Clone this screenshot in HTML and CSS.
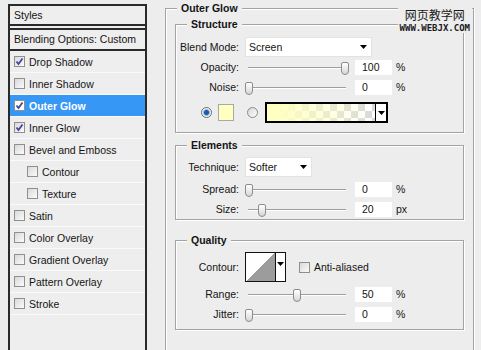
FILE: index.html
```html
<!DOCTYPE html>
<html lang="en">
  <head>
    <meta charset="UTF-8" />
    <title>Layer Style - Outer Glow</title>
    <link rel="stylesheet" href="styles.css">
  </head>
  <body>
    <div class="dialog">
      <div class="styles-panel">
        <div class="panel-head">Styles</div>
        <div class="panel-blend">Blending Options: Custom</div>
        <ul class="effects">
          <li><span class="box"><svg viewBox="0 0 9 9"><path d="M1.5 4.5 L3.5 7 L7.5 1.5" /></svg></span>Drop Shadow</li>
          <li><span class="box"></span>Inner Shadow</li>
          <li class="active"><span class="box"><svg viewBox="0 0 9 9"><path d="M1.5 4.5 L3.5 7 L7.5 1.5" /></svg></span>Outer Glow</li>
          <li><span class="box"><svg viewBox="0 0 9 9"><path d="M1.5 4.5 L3.5 7 L7.5 1.5" /></svg></span>Inner Glow</li>
          <li><span class="box"></span>Bevel and Emboss</li>
          <li class="sub"><span class="box"></span>Contour</li>
          <li class="sub"><span class="box"></span>Texture</li>
          <li><span class="box"></span>Satin</li>
          <li><span class="box"></span>Color Overlay</li>
          <li><span class="box"></span>Gradient Overlay</li>
          <li><span class="box"></span>Pattern Overlay</li>
          <li><span class="box"></span>Stroke</li>
        </ul>
      </div>

      <fieldset class="group outer">
        <legend>Outer Glow</legend>

        <fieldset class="group inner structure">
          <legend>Structure</legend>
          <div class="row">
            <label>Blend Mode:</label>
            <div class="select blend"><span>Screen</span><svg viewBox="0 0 7 4"><path d="M0 0h7L3.5 4z" /></svg></div>
          </div>
          <div class="row">
            <label>Opacity:</label>
            <div class="slider"><span class="thumb" style="--pos: 1"></span></div>
            <span class="num">100</span><span class="unit">%</span>
          </div>
          <div class="row">
            <label>Noise:</label>
            <div class="slider"><span class="thumb" style="--pos: 0"></span></div>
            <span class="num">0</span><span class="unit">%</span>
          </div>
          <div class="color-row">
            <span class="radio on"></span>
            <span class="swatch"></span>
            <span class="radio"></span>
            <div class="gradient">
              <span class="gradient-fill"></span>
              <span class="gradient-arrow"><svg viewBox="0 0 7 4"><path d="M0 0h7L3.5 4z" /></svg></span>
            </div>
          </div>
        </fieldset>

        <fieldset class="group inner elements">
          <legend>Elements</legend>
          <div class="row">
            <label>Technique:</label>
            <div class="select technique"><span>Softer</span><svg viewBox="0 0 7 4"><path d="M0 0h7L3.5 4z" /></svg></div>
          </div>
          <div class="row spaced">
            <label>Spread:</label>
            <div class="slider"><span class="thumb" style="--pos: 0"></span></div>
            <span class="num">0</span><span class="unit">%</span>
          </div>
          <div class="row">
            <label>Size:</label>
            <div class="slider"><span class="thumb" style="--pos: 0.14"></span></div>
            <span class="num">20</span><span class="unit">px</span>
          </div>
        </fieldset>

        <fieldset class="group inner quality">
          <legend>Quality</legend>
          <div class="row contour-row">
            <label>Contour:</label>
            <div class="contour">
              <span class="curve"></span>
              <span class="contour-arrow"><svg viewBox="0 0 7 4"><path d="M0 0h7L3.5 4z" /></svg></span>
            </div>
            <span class="box"></span>
            <span class="check-label">Anti-aliased</span>
          </div>
          <div class="row spaced">
            <label>Range:</label>
            <div class="slider"><span class="thumb" style="--pos: 0.5"></span></div>
            <span class="num">50</span><span class="unit">%</span>
          </div>
          <div class="row">
            <label>Jitter:</label>
            <div class="slider"><span class="thumb" style="--pos: 0"></span></div>
            <span class="num">0</span><span class="unit">%</span>
          </div>
        </fieldset>
      </fieldset>

      <div class="watermark">
        <div class="wm-cn">网页教学网</div>
        <div class="wm-url">WWW.WEBJX.COM</div>
      </div>
    </div>
  </body>
</html>
```

FILE: styles.css
```css
body {
  margin: 0;
  background-color: #ededed;
  font-family: "Liberation Sans", Arial, sans-serif;
  font-size: 10.5px;
  color: #141414;
  overflow: hidden;
}
.dialog {
  position: relative;
  display: flex;
  align-items: flex-start;
  height: 350px;
  padding-left: 8px;
}

/* left list of effects */
.styles-panel {
  flex: none;
  width: 139px;
  height: 360px;
  margin-top: 4px;
  box-sizing: border-box;
  border: 2px solid #2a2a2a;
  border-bottom: none;
  background-color: #eeeeee;
}
.panel-head {
  height: 18px;
  line-height: 18px;
  padding-left: 4px;
  border-bottom: 2px solid #2a2a2a;
  margin-bottom: 2px;
}
.panel-blend {
  height: 19px;
  line-height: 19px;
  padding-left: 4px;
  border-top: 2px solid #2a2a2a;
  border-bottom: 2px solid #2a2a2a;
}
.effects {
  list-style: none;
  margin: 0;
  padding: 0;
}
.effects li {
  display: flex;
  align-items: center;
  gap: 4px;
  height: 21px;
  padding-left: 4px;
  border-bottom: 1px solid #fafafa;
}
.effects li.sub {
  padding-left: 17px;
}
.effects li.active {
  background-color: #3797f5;
  color: #ffffff;
  font-weight: bold;
}
.effects li.active .box {
  background: #ffffff;
}

.box {
  flex: none;
  display: flex;
  align-items: center;
  justify-content: center;
  width: 11px;
  height: 11px;
  box-sizing: border-box;
  border: 1px solid #8f8f8f;
  background: linear-gradient(135deg, #d9d9d9, #fbfbfb);
}
.box svg {
  width: 9px;
  height: 9px;
}
.box path {
  fill: none;
  stroke: #45459a;
  stroke-width: 1.8;
}

/* group boxes */
.group {
  margin: 0;
  min-width: 0;
  border: 1px solid #a3a3a3;
  box-shadow: 1px 1px 0 #ffffff, inset 1px 1px 0 #ffffff;
}
.group legend {
  font-weight: bold;
  line-height: 13px;
  padding: 0 4px;
  background-color: #ededed;
}
.outer {
  flex: none;
  width: 309px;
  height: 360px;
  box-sizing: border-box;
  margin: 2px 0 0 18px;
  padding: 3px 9px 0;
}
.outer > legend {
  margin-left: 2px;
}
.inner {
  padding: 0;
}
.inner > legend {
  margin-left: 11px;
}
.structure {
  padding: 6px 0 9px;
}
.elements {
  margin-top: 6px;
  padding: 5px 0 0;
}
.quality {
  margin-top: 14px;
  padding: 5px 0 5px;
}

.row {
  display: flex;
  align-items: center;
  height: 20px;
}
.row.spaced {
  margin-top: 2px;
}
.row > label {
  flex: none;
  width: 63px;
  margin-right: 6px;
  text-align: right;
}

.select {
  display: flex;
  align-items: center;
  justify-content: space-between;
  height: 20px;
  box-sizing: border-box;
  padding: 0 4px 0 3px;
  background-color: #ffffff;
  border: 1px solid #e2e2e2;
}
.select svg,
.gradient-arrow svg,
.contour-arrow svg {
  width: 7px;
  height: 4px;
}
.blend {
  width: 127px;
}
.technique {
  width: 67px;
}

.slider {
  position: relative;
  flex: none;
  width: 104px;
  height: 20px;
}
.slider::before {
  content: "";
  position: absolute;
  left: 3px;
  right: 3px;
  top: 10px;
  height: 1px;
  background-color: #9e9e9e;
  box-shadow: 0 1px 0 #ffffff;
}
.thumb {
  position: absolute;
  top: 5px;
  left: calc(var(--pos) * 96px);
  width: 8px;
  height: 13px;
  box-sizing: border-box;
  border: 1px solid #8c8c8c;
  border-radius: 2px 2px 4px 4px;
  background: linear-gradient(#ffffff, #d6d6d6);
}
.num {
  flex: none;
  width: 37px;
  height: 15px;
  line-height: 15px;
  box-sizing: border-box;
  margin-left: 6px;
  padding-left: 7px;
  background-color: #ffffff;
}
.unit {
  margin-left: 4px;
}

.color-row {
  display: flex;
  align-items: center;
  height: 21px;
  margin-top: 5px;
  padding-left: 25px;
}
.radio {
  flex: none;
  width: 11px;
  height: 11px;
  box-sizing: border-box;
  border-radius: 50%;
  border: 1px solid #8a8a8a;
  background: linear-gradient(135deg, #d6d6d6, #ffffff);
}
.radio.on {
  border-color: #6a6a6a;
  background: radial-gradient(circle, #1f5aa0 0 2px, #5d9ad8 2.6px, #d4e6f8 3.6px, #ffffff 4.5px);
}
.swatch {
  flex: none;
  width: 16px;
  height: 17px;
  box-sizing: border-box;
  margin: 0 13px 0 6px;
  border: 1px solid #a8a8a8;
  background-color: #ffffc0;
}
.gradient {
  display: flex;
  width: 123px;
  height: 21px;
  box-sizing: border-box;
  margin-left: 7px;
  border: 2px solid #000000;
}
.gradient-fill {
  flex: 1;
  background: linear-gradient(to right, #ffffc2 10%, rgba(255, 255, 194, 0)),
    repeating-conic-gradient(#d9d9d9 0 25%, #ffffff 0 50%) 0 0 / 14px 14px;
}
.gradient-arrow {
  display: flex;
  align-items: center;
  justify-content: center;
  width: 10px;
  border-left: 1px solid #000000;
  background-color: #ffffff;
}

.contour-row {
  height: 30px;
}
.contour {
  display: flex;
  height: 30px;
  box-sizing: border-box;
  border: 1px solid #111111;
  background-color: #ffffff;
}
.curve {
  width: 29px;
  border-right: 1px solid #111111;
  background: linear-gradient(to bottom right, #ffffff 50%, #9c9c9c 50%);
}
.contour-arrow {
  display: flex;
  justify-content: center;
  width: 9px;
  padding-top: 9px;
}
.contour-row .box {
  margin-left: 13px;
}
.check-label {
  margin-left: 4px;
}

.watermark {
  position: absolute;
  top: 7px;
  right: 9px;
  padding: 0 2px;
  text-align: center;
  background-color: #ededed;
  color: #1a1a1a;
}
.wm-cn {
  font-family: "Noto Sans CJK SC", sans-serif;
  font-size: 12px;
  line-height: 16px;
}
.wm-url {
  font-family: "DejaVu Sans Mono", monospace;
  font-weight: bold;
  font-size: 9px;
  line-height: 10px;
}
```
